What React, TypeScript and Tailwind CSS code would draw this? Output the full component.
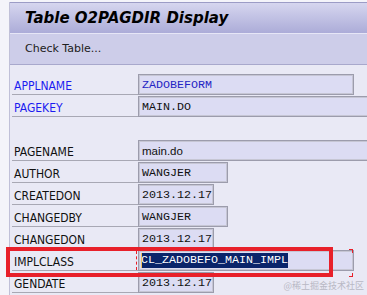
import React from "react";

type Row = {
  label: string;
  value: string;
  blue?: boolean;
  valueBlue?: boolean;
  mono?: boolean;
  w: number | "full";
  selected?: boolean;
};

const rows: (Row | null)[] = [
  { label: "APPLNAME", value: "ZADOBEFORM", blue: true, valueBlue: true, mono: true, w: 216 },
  { label: "PAGEKEY", value: "MAIN.DO", blue: true, mono: true, w: "full" },
  null,
  { label: "PAGENAME", value: "main.do", mono: false, w: "full" },
  { label: "AUTHOR", value: "WANGJER", mono: true, w: 90 },
  { label: "CREATEDON", value: "2013.12.17", mono: true, w: 76 },
  { label: "CHANGEDBY", value: "WANGJER", mono: true, w: 90 },
  { label: "CHANGEDON", value: "2013.12.17", mono: true, w: 76 },
  { label: "IMPLCLASS", value: "CL_ZADOBEFO_MAIN_IMPL", mono: true, w: 216, selected: true },
  { label: "GENDATE", value: "2013.12.17", mono: true, w: 76 },
];

const condensed = { fontFamily: '"DejaVu Sans Condensed", "DejaVu Sans", sans-serif', fontStretch: "condensed" as const };

function Field({ r }: { r: Row }) {
  const widthCls = r.w === "full" ? "flex-1 mr-[-20px]" : "";
  return (
    <div
      className={`relative h-[21px] border border-[#9c9cac] bg-[#dcdcf3] shadow-[inset_0_0_0_1px_#c6c6d4] flex items-center pl-[3px] ${widthCls}`}
      style={r.w === "full" ? undefined : { width: r.w }}
    >
      {r.selected ? (
        <>
          <span className="absolute left-[2px] top-[2px] h-[15px] w-[1px] bg-[#f0c060]" />
          <span
            className="bg-[#0a246a] text-white leading-[15px] text-[11.66px] ml-[-1px]"
            style={{ fontFamily: '"Liberation Mono", monospace' }}
          >
            {r.value}
          </span>
        </>
      ) : (
        <span
          className={`${r.mono ? "text-[11.66px]" : "text-[11.5px]"} ${r.valueBlue ? "text-[#2424c4]" : "text-[#101010]"} leading-[15px] pt-[1px]`}
          style={{
            fontFamily: r.mono ? '"Liberation Mono", monospace' : '"Liberation Sans", sans-serif',
          }}
        >
          {r.value}
        </span>
      )}
    </div>
  );
}

export default function App() {
  return (
    <div className="relative w-[367px] h-[295px] overflow-hidden bg-[#f4f4fa] flex">
      <div className="w-[9px] shrink-0 bg-[#f4f4fa]" />
      <div className="flex-1 flex flex-col border-l border-[#c0c0d8] mt-[2px]">
        {/* Title bar */}
        <div className="h-[31px] border-t border-[#9c9cc6] bg-gradient-to-b from-[#d6d6ef] to-[#acacd8] flex items-center pl-[15px]">
          <span
            className="text-[15px] font-bold italic text-black leading-none pt-[1px]"
            style={{ fontFamily: '"DejaVu Sans", sans-serif' }}
          >
            Table O2PAGDIR Display
          </span>
        </div>
        {/* Toolbar */}
        <div className="h-[32px] border-t border-[#e6e6f6] border-b border-b-[#a8a8cc] bg-[#cdcde9] flex items-center pl-[15px]">
          <span className="text-[11px] text-[#202020]" style={{ fontFamily: '"DejaVu Sans", sans-serif' }}>
            Check Table...
          </span>
        </div>
        {/* Content */}
        <div className="flex-1 bg-[#e9e9f5] pl-[2px] pt-[8px] flex flex-col">
          {rows.map((r, i) =>
            r === null ? (
              <div key={i} className="h-[22px] shrink-0" />
            ) : (
              <div key={i} className="h-[22px] shrink-0 flex items-end">
                <div className={`w-[126px] h-[22px] border-b border-[#a8a8b4] ${r.blue ? "text-[#1c1cf0]" : "text-[#101010]"}`}>
                  <span className="block text-[12px] leading-[12px] pt-[7px] pl-[2px]" style={condensed}>
                    {r.label}
                  </span>
                </div>
                <Field r={r} />
              </div>
            )
          )}
        </div>
      </div>

      {/* Red annotation box */}
      <div className="absolute left-[6px] top-[247px] w-[327px] h-[30px] border-4 border-[#e8202a]" />
      {/* Focus markers */}
      <div className="absolute left-[136px] top-[251px] w-[1px] h-[19px] border-l border-dashed border-[#e8202a]" />
      <div className="absolute left-[349px] top-[249px] w-[4px] h-[4px] border-t border-r border-[#e8202a]" />
      <div className="absolute left-[349px] top-[273px] w-[4px] h-[4px] border-b border-r border-[#e8202a]" />

      {/* Watermark */}
      <div
        className="absolute right-[3px] top-[279px] text-[9px] text-[#b8b8c4]"
        style={{ fontFamily: '"Noto Sans CJK SC", "Noto Sans", sans-serif' }}
      >
        @稀土掘金技术社区
      </div>
    </div>
  );
}
